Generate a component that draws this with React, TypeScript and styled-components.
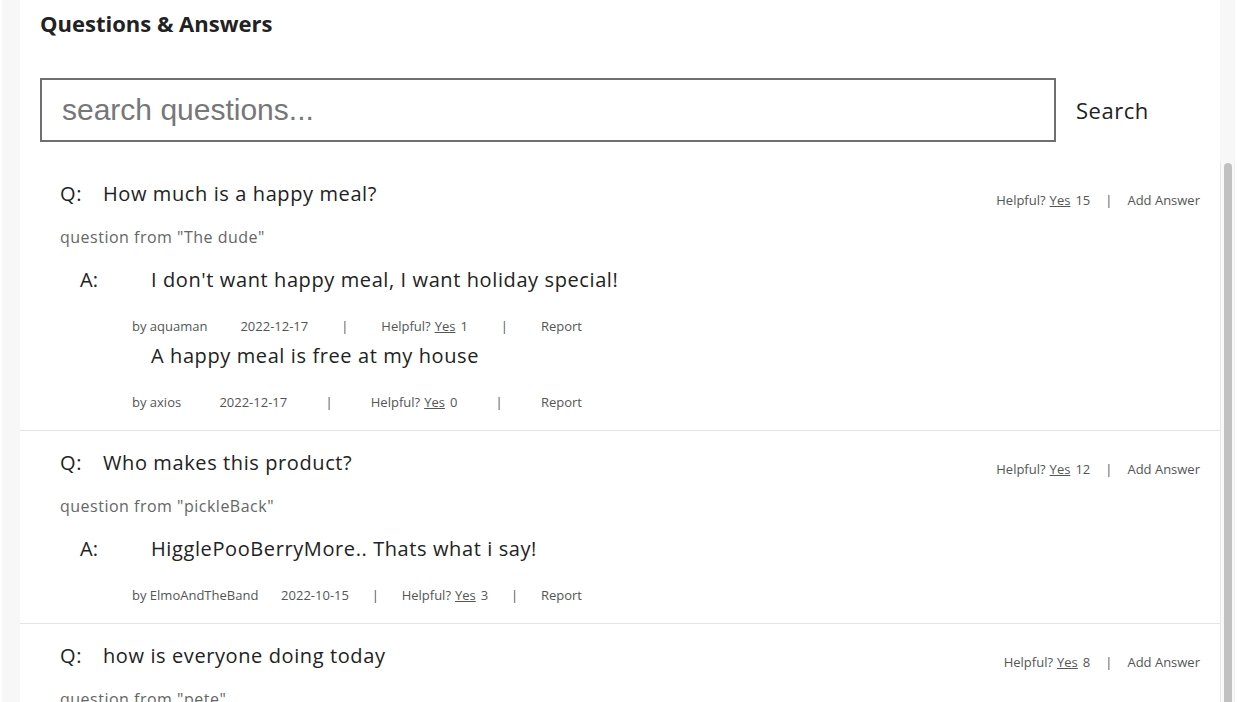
import React from "react";
import styled, { createGlobalStyle } from "styled-components";

const Global = createGlobalStyle`
  html, body { margin: 0; padding: 0; overflow: hidden; background: #ffffff; }
  * { box-sizing: border-box; }
`;

const Page = styled.div`
  margin: 0 2px;
  height: 702px;
  background: #f7f7f7;
  padding-left: 18px;
  display: flex;
  flex-direction: column;
  overflow: hidden;
`;

const Header = styled.header`
  width: 1200px;
  flex-shrink: 0;
  background: #ffffff;
  padding: 8px 20px 20px 20px;
`;

const Title = styled.h2`
  margin: 0;
  font-family: "Open Sans", "Noto Sans", sans-serif;
  font-weight: 700;
  font-size: 22px;
  line-height: 30px;
  color: #222222;
`;

const SearchRow = styled.form`
  display: flex;
  align-items: center;
  margin-top: 40px;
`;

const SearchInput = styled.input`
  width: 1016px;
  height: 64px;
  border: 2px solid #6f6f6f;
  padding: 0 20px;
  font-family: "Liberation Sans", Arial, sans-serif;
  font-size: 30px;
  color: #333;
  outline: none;
  &::placeholder { color: #777777; }
`;

const SearchButton = styled.button`
  border: none;
  background: transparent;
  margin-left: 20px;
  padding: 0;
  font-family: "Open Sans", sans-serif;
  font-size: 22px;
  letter-spacing: 0.5px;
  color: #222222;
  cursor: pointer;
`;

const Body = styled.div`
  flex: 1;
  min-height: 0;
  display: flex;
`;

const List = styled.div`
  width: 1200px;
  overflow: hidden;
`;

const ScrollTrack = styled.div`
  width: 15px;
  background: #f9f9f9;
  border-left: 1px solid #e8e8e8;
  border-right: 1px solid #efefef;
  padding: 1px 2px 0 3px;
  display: flex;
`;

const ScrollThumb = styled.div`
  flex: 1;
  background: #c1c1c1;
  border-radius: 4px 4px 0 0;
`;

const Item = styled.article`
  background: #ffffff;
  padding: 20px 20px 20px 40px;
  border-bottom: 1px solid #e4e4e4;
  font-family: "Open Sans", sans-serif;
`;

const QRow = styled.div`
  display: flex;
  align-items: flex-start;
  justify-content: space-between;
  height: 24px;
`;

const QText = styled.div`
  font-size: 20px;
  line-height: 24px;
  letter-spacing: 0.6px;
  color: #222222;
  display: flex;
`;

const QLabel = styled.span`
  width: 43px;
`;

const Actions = styled.div`
  display: flex;
  align-items: center;
  font-size: 13px;
  line-height: 16px;
  color: #555555;
  margin-top: 10px;
`;

const Yes = styled.span`
  text-decoration: underline;
  margin: 0 5px 0 4px;
`;

const Sep = styled.span`
  margin: 0 15px;
`;

const From = styled.div`
  margin-top: 21px;
  font-size: 16px;
  line-height: 20px;
  letter-spacing: 0.5px;
  color: #666666;
`;

const AnswerSection = styled.div`
  display: flex;
  margin-top: 21px;
  padding-left: 20px;
`;

const ALabel = styled.div`
  width: 52px;
  font-size: 20px;
  line-height: 24px;
  color: #222222;
`;

const Answers = styled.div`
  display: flex;
  flex-direction: column;
`;

const Answer = styled.div<{ $first: boolean }>`
  margin-top: ${(p) => (p.$first ? "0" : "10px")};
`;

const AText = styled.div`
  padding-left: 19px;
  font-size: 20px;
  line-height: 24px;
  letter-spacing: 0.6px;
  color: #222222;
`;

const Meta = styled.div`
  width: 450px;
  margin-top: 26px;
  display: flex;
  justify-content: space-between;
  font-size: 13px;
  line-height: 16px;
  color: #555555;
`;

type A = { body: string; by: string; date: string; helpful: number };
type Q = { q: string; from: string; helpful: number; answers: A[] };

const data: Q[] = [
  {
    q: "How much is a happy meal?",
    from: "The dude",
    helpful: 15,
    answers: [
      { body: "I don't want happy meal, I want holiday special!", by: "aquaman", date: "2022-12-17", helpful: 1 },
      { body: "A happy meal is free at my house", by: "axios", date: "2022-12-17", helpful: 0 },
    ],
  },
  {
    q: "Who makes this product?",
    from: "pickleBack",
    helpful: 12,
    answers: [
      { body: "HigglePooBerryMore.. Thats what i say!", by: "ElmoAndTheBand", date: "2022-10-15", helpful: 3 },
    ],
  },
  {
    q: "how is everyone doing today",
    from: "pete",
    helpful: 8,
    answers: [],
  },
];

export default function App() {
  return (
    <>
      <Global />
      <Page>
        <Header>
          <Title>Questions &amp; Answers</Title>
          <SearchRow onSubmit={(e) => e.preventDefault()}>
            <SearchInput placeholder="search questions..." />
            <SearchButton type="submit">Search</SearchButton>
          </SearchRow>
        </Header>
        <Body>
          <List>
            {data.map((item, i) => (
              <Item key={i}>
                <QRow>
                  <QText>
                    <QLabel>Q:</QLabel>
                    <span>{item.q}</span>
                  </QText>
                  <Actions>
                    Helpful?<Yes>Yes</Yes>
                    {item.helpful}
                    <Sep>|</Sep>
                    Add Answer
                  </Actions>
                </QRow>
                <From>question from "{item.from}"</From>
                {item.answers.length > 0 && (
                  <AnswerSection>
                    <ALabel>A:</ALabel>
                    <Answers>
                      {item.answers.map((a, j) => (
                        <Answer key={j} $first={j === 0}>
                          <AText>{a.body}</AText>
                          <Meta>
                            <span>by {a.by}</span>
                            <span>{a.date}</span>
                            <span>|</span>
                            <span>
                              Helpful?<Yes>Yes</Yes>
                              {a.helpful}
                            </span>
                            <span>|</span>
                            <span>Report</span>
                          </Meta>
                        </Answer>
                      ))}
                    </Answers>
                  </AnswerSection>
                )}
              </Item>
            ))}
          </List>
          <ScrollTrack>
            <ScrollThumb />
          </ScrollTrack>
        </Body>
      </Page>
    </>
  );
}
